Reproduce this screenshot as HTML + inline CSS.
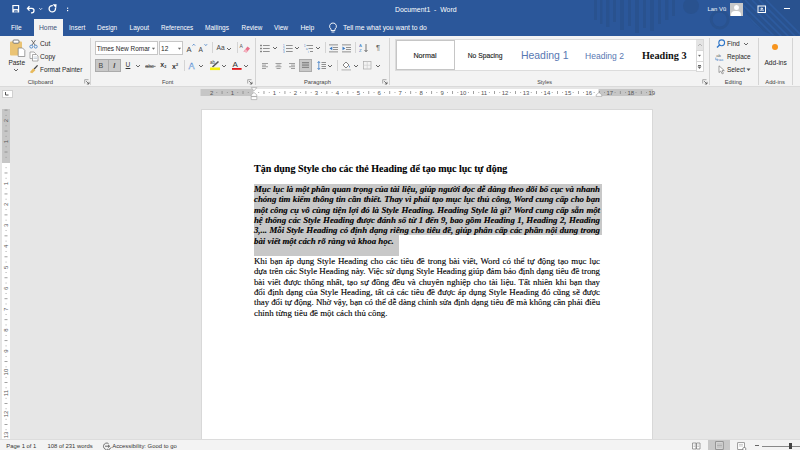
<!DOCTYPE html>
<html><head><meta charset="utf-8">
<style>
*{margin:0;padding:0;box-sizing:border-box}
html,body{width:800px;height:450px;overflow:hidden;background:#e6e6e6;font-family:"Liberation Sans",sans-serif}
.a{position:absolute;white-space:nowrap}
#title{position:absolute;left:0;top:0;width:800px;height:36px;background:#2b579a;overflow:hidden}
.tab{position:absolute;top:22.8px;font-size:6.5px;color:#fff;line-height:9px;white-space:nowrap}
#ribbon{position:absolute;left:0;top:36px;width:800px;height:51px;background:#f3f3f3;border-bottom:1px solid #dadada}
.rt{position:absolute;font-size:7px;color:#262626;line-height:8px;white-space:nowrap}
.gl{position:absolute;top:81px;font-size:6.5px;color:#444;line-height:8px;white-space:nowrap}
.sep{position:absolute;top:40px;width:1px;height:46px;background:#d2d2d2}
#page{position:absolute;left:201px;top:109px;width:452px;height:331px;background:#fff;border:1px solid #d8d8d8;border-bottom:none}
.ln{position:absolute;left:254px;width:346px;font-family:"Liberation Serif",serif;font-size:8.86px;line-height:10px;white-space:nowrap;color:#000;-webkit-text-stroke:0.2px rgba(0,0,0,0.6)}
.j{text-align:justify;text-align-last:justify;white-space:normal;letter-spacing:-0.05px}
#status{position:absolute;left:0;top:439.3px;width:800px;height:11px;background:#f3f3f3;border-top:1px solid #dcdcdc}
.st{position:absolute;top:441px;font-size:6.2px;color:#333;line-height:10px;white-space:nowrap}
</style></head><body>
<div id="title">
 <svg width="800" height="36" style="position:absolute;left:0;top:0">
  <defs><clipPath id="cc"><circle cx="786" cy="-8" r="45"/></clipPath></defs>
  <g fill="#29528f">
   <rect x="594" y="0" width="3" height="20"/><rect x="600" y="0" width="2.5" height="24"/><rect x="606" y="0" width="3.5" height="27"/>
   <rect x="613" y="0" width="3" height="22"/><rect x="620" y="0" width="4" height="30"/><rect x="628" y="0" width="3" height="26"/>
   <rect x="635" y="0" width="4" height="33"/><rect x="643" y="0" width="3" height="28"/><rect x="650" y="0" width="4" height="31"/>
   <rect x="658" y="0" width="3" height="24"/><rect x="665" y="0" width="3.5" height="20"/><rect x="672" y="0" width="3" height="16"/>
   <circle cx="691" cy="6" r="8"/>
   <circle cx="786" cy="-8" r="45"/>
  </g>
  <circle cx="719.7" cy="19.5" r="8.5" fill="none" stroke="#29528f" stroke-width="3"/>
  <g stroke="#2d5b9f" stroke-width="1.6" clip-path="url(#cc)">
   <path d="M724 0 L764 40 M731 0 L771 40 M738 0 L778 40 M745 0 L785 40 M752 0 L792 40 M759 0 L799 40 M766 0 L806 40"/>
  </g>
 </svg>
 <!-- QAT -->
 <svg width="80" height="18" style="position:absolute;left:0;top:0">
  <g fill="none" stroke="#fff" stroke-width="1.1">
   <path d="M29.5 6.2 l-2 2.2 l2 2.2" stroke-width="1.3"/>
   <path d="M27.8 8.4 h4 a2.2 2.2 0 0 1 0 4.4 h-0.8" stroke-width="1.3"/>
   <path d="M39.3 8.2l1.4 1.4l1.4-1.4" stroke-width="0.8"/>
   <path d="M55.4 8 A3.2 3.2 0 1 1 52.8 5.6" stroke-width="1.3"/>
  </g>
  <path d="M52.6 4.2 L56.6 4.2 L56.2 8.4 z" fill="#fff"/><rect x="12.3" y="5" width="6.9" height="7.5" fill="#fff"/><rect x="13.5" y="6.1" width="4.5" height="3" fill="#2b579a"/><rect x="14.3" y="10.3" width="3.2" height="2.2" fill="#2b579a"/><rect x="15.6" y="10.8" width="0.8" height="1.4" fill="#fff"/>
  <rect x="67" y="7.6" width="1.2" height="1.2" fill="#fff"/><rect x="67" y="10" width="1.2" height="1.2" fill="#fff"/>
 </svg>
 <div class="a" style="left:395px;top:4.5px;font-size:6.9px;color:#fff;line-height:9px">Document1&nbsp; -&nbsp; Word</div>
 <div class="a" style="left:707.5px;top:5px;font-size:5.9px;color:#f0f4fa;line-height:9px">Lan Vũ</div>
 <div style="position:absolute;left:729.5px;top:3px;width:13.5px;height:12.7px;background:#c9c9c9;overflow:hidden">
  <div style="position:absolute;left:4.2px;top:1.8px;width:5.2px;height:5.5px;border-radius:50%;background:#fff"></div>
  <div style="position:absolute;left:1.8px;top:8px;width:10px;height:8px;border-radius:4px 4px 0 0;background:#fff"></div>
 </div>
 <svg width="14" height="10" style="position:absolute;left:757px;top:4.5px"><rect x="1" y="1" width="7.5" height="6.5" fill="none" stroke="#fff" stroke-width="1"/><path d="M2.7 5.2 h4.2 M4.8 5 V2.8 M3.6 4 l1.2-1.2 l1.2 1.2" stroke="#fff" stroke-width="0.8" fill="none"/></svg>
 <div style="position:absolute;left:784px;top:8px;width:6px;height:1px;background:#fff"></div>
 <div style="position:absolute;left:33.6px;top:18.8px;width:29.4px;height:17.2px;background:#f3f3f3"></div>
 <div class="tab" style="left:11px;font-size:6.6px">File</div>
 <div class="tab" style="left:39px;font-size:6.75px;color:#41557a">Home</div>
 <div class="tab" style="left:69px;font-size:6.5px">Insert</div>
 <div class="tab" style="left:97px;font-size:6.5px">Design</div>
 <div class="tab" style="left:129.6px;font-size:6.5px">Layout</div>
 <div class="tab" style="left:161px;font-size:6.3px">References</div>
 <div class="tab" style="left:205px;font-size:6.55px">Mailings</div>
 <div class="tab" style="left:241.6px;font-size:6.3px">Review</div>
 <div class="tab" style="left:274px;font-size:6.5px">View</div>
 <div class="tab" style="left:300.4px;font-size:6.8px">Help</div>
 <svg width="10" height="11" style="position:absolute;left:328px;top:22px"><path d="M5 1 a3.3 3.3 0 0 0 -2 6 v1.5 h4 v-1.5 a3.3 3.3 0 0 0 -2 -6z M3.5 10h3" fill="none" stroke="#fff" stroke-width="0.9"/></svg>
 <div class="tab" style="left:343px;font-size:6.8px">Tell me what you want to do</div>
</div>

<div id="ribbon"></div>
<!-- Clipboard group -->
<svg width="18" height="20" style="position:absolute;left:9px;top:39px">
<rect x="1" y="2.6" width="12" height="13.8" rx="1" fill="#eac374"/>
<rect x="4" y="1" width="6" height="3.2" rx="1" fill="#fff" stroke="#6e6e6e" stroke-width="0.9"/>
<path d="M9.2 9 h4.3 l2.3 2.3 v6.2 h-6.6z" fill="#fff" stroke="#7a7a7a" stroke-width="0.7"/>
</svg>
<div class="a" style="left:8.4px;top:57.50px;font-size:6.5px;line-height:10px;color:#262626;">Paste</div>
<svg width="6" height="4" style="position:absolute;left:13.00px;top:68.40px"><path d="M1 1 L3 3 L5 1" fill="none" stroke="#555" stroke-width="0.9"/></svg>
<svg width="10" height="10" style="position:absolute;left:29px;top:39px">
<path d="M2.5 1 L6.2 6.3 M6.5 1 L2.8 6.3" stroke="#555" stroke-width="0.8"/>
<circle cx="2.3" cy="7.6" r="1.5" fill="none" stroke="#4a86c8" stroke-width="0.9"/><circle cx="6.7" cy="7.6" r="1.5" fill="none" stroke="#4a86c8" stroke-width="0.9"/>
</svg>
<div class="a" style="left:40px;top:38.75px;font-size:6.7px;line-height:10px;color:#262626;">Cut</div>
<svg width="10" height="11" style="position:absolute;left:29px;top:51px">
<path d="M1 1 h4 l1.5 1.5 v5 h-5.5z" fill="#fff" stroke="#8a8a8a" stroke-width="0.7"/>
<path d="M3.5 3.5 h4 l1.5 1.5 v5 h-5.5z" fill="#fff" stroke="#8a8a8a" stroke-width="0.7"/>
<path d="M4.5 6h3.5M4.5 7.5h3.5" stroke="#9ab" stroke-width="0.5"/>
</svg>
<div class="a" style="left:40px;top:51.60px;font-size:6.6px;line-height:10px;color:#262626;">Copy</div>
<svg width="10" height="10" style="position:absolute;left:29px;top:64px">
<path d="M0.8 8.2 L4.2 4.2 L6.4 6.2 L3.2 9.3z" fill="#e7b95a"/>
<path d="M5.2 5 L8.6 1.4" stroke="#444" stroke-width="1.3"/>
</svg>
<div class="a" style="left:40px;top:64.50px;font-size:6.4px;line-height:10px;color:#262626;">Format Painter</div>
<div class="a" style="left:27.75px;top:77.25px;font-size:5.9px;line-height:10px;color:#444;">Clipboard</div>
<svg width="6" height="6" style="position:absolute;left:83.5px;top:79px"><path d="M0.7 4.5 V0.7 H4.5" stroke="#888" stroke-width="0.7" fill="none"/><path d="M2.2 2.2 L5 5 M5 2.8 V5 H2.8" stroke="#555" stroke-width="0.8" fill="none"/></svg>
<div style="position:absolute;left:90px;top:38px;width:1px;height:47px;background:#d4d4d4"></div>
<!-- Font group -->
<div style="position:absolute;left:95.3px;top:41.3px;width:62.4px;height:13.4px;background:#fff;border:1px solid #c6c6c6"></div>
<div class="a" style="left:96.8px;top:43.60px;font-size:6.45px;line-height:10px;color:#262626;">Times New Romar</div>
<svg width="5" height="4" style="position:absolute;left:151.30px;top:46.50px"><path d="M0.5 0.5 L4.5 0.5 L2.5 3z" fill="#666" transform="scale(0.8) translate(0.6 0.4)"/></svg>
<div style="position:absolute;left:159px;top:41.3px;width:23.5px;height:13.4px;background:#fff;border:1px solid #c6c6c6"></div>
<div class="a" style="left:161px;top:43.60px;font-size:6.6px;line-height:10px;color:#262626;">12</div>
<svg width="5" height="4" style="position:absolute;left:176.50px;top:46.50px"><path d="M0.5 0.5 L4.5 0.5 L2.5 3z" fill="#666" transform="scale(0.8) translate(0.6 0.4)"/></svg>
<svg width="12" height="10" style="position:absolute;left:186px;top:43px"><text x="0.5" y="8.5" font-family="Liberation Sans" font-size="7.5" fill="#444">A</text><path d="M6.5 2.6 l1.3-1.4 l1.3 1.4" fill="none" stroke="#3b7ac4" stroke-width="0.8"/></svg>
<svg width="12" height="10" style="position:absolute;left:198px;top:43px"><text x="0.5" y="8.5" font-family="Liberation Sans" font-size="6.5" fill="#444">A</text><path d="M6.5 1.2 l1.3 1.4 l1.3-1.4" fill="none" stroke="#3b7ac4" stroke-width="0.8"/></svg>
<div style="position:absolute;left:211.7px;top:42px;width:1px;height:11px;background:#d4d4d4"></div>
<div class="a" style="left:216.6px;top:43.10px;font-size:6.6px;line-height:10px;color:#444;">Aa</div>
<svg width="6" height="4" style="position:absolute;left:225.50px;top:46.50px"><path d="M1 1 L3 3 L5 1" fill="none" stroke="#555" stroke-width="0.9"/></svg>
<div style="position:absolute;left:236.8px;top:42px;width:1px;height:11px;background:#d4d4d4"></div>
<svg width="12" height="12" style="position:absolute;left:239px;top:42px"><text x="0.5" y="5.5" font-family="Liberation Sans" font-size="5" fill="#555">A</text><path d="M4.5 9.5 L8.5 4.5 L11 6.5 L7.5 10.5z" fill="#e8708a"/><path d="M4.5 9.5 L6.5 7 L8.7 9 L7.5 10.5z" fill="#f4b4c0"/></svg>
<div style="position:absolute;left:95.3px;top:59px;width:25.6px;height:12.7px;background:#c8c8c8;border:1px solid #ababab"></div>
<div style="position:absolute;left:108px;top:59px;width:1px;height:12.7px;background:#ababab"></div>
<div class="a" style="left:98.6px;top:61.30px;font-size:7px;line-height:10px;color:#444;">B</div>
<div class="a" style="left:113.3px;top:61.30px;font-size:7px;line-height:10px;color:#444;font-style:italic;font-weight:bold">I</div>
<div class="a" style="left:125.6px;top:60.40px;font-size:6.6px;line-height:10px;color:#333;text-decoration:underline">U</div>
<svg width="6" height="4" style="position:absolute;left:134.90px;top:64.00px"><path d="M1 1 L3 3 L5 1" fill="none" stroke="#555" stroke-width="0.9"/></svg>
<svg width="14" height="8" style="position:absolute;left:144.5px;top:61.5px"><text x="0.3" y="6.2" font-family="Liberation Sans" font-size="5.6" fill="#555" letter-spacing="-0.2">abc</text><rect x="0" y="3.9" width="10.6" height="0.7" fill="#444"/></svg>
<div class="a" style="left:160.3px;top:60.40px;font-size:7px;line-height:10px;color:#333;font-weight:bold">x<span style="font-size:3.8px;vertical-align:-1px">2</span></div>
<div class="a" style="left:172px;top:60.40px;font-size:7px;line-height:10px;color:#333;font-weight:bold">x<span style="font-size:3.8px;vertical-align:3px">2</span></div>
<div style="position:absolute;left:183.6px;top:60px;width:1px;height:11px;background:#d4d4d4"></div>
<svg width="10" height="11" style="position:absolute;left:188px;top:60px"><text x="0.6" y="9" font-family="Liberation Sans" font-size="9" fill="#e4eefa" stroke="#4f8ad0" stroke-width="0.35">A</text></svg>
<svg width="6" height="4" style="position:absolute;left:198.00px;top:64.00px"><path d="M1 1 L3 3 L5 1" fill="none" stroke="#555" stroke-width="0.9"/></svg>
<svg width="12" height="12" style="position:absolute;left:208.5px;top:59px"><text x="1" y="4.5" font-family="Liberation Sans" font-size="4.5" fill="#444">ab</text><path d="M3.5 8 L9.5 2.5" stroke="#555" stroke-width="1.6"/><rect x="1" y="8.5" width="10" height="2.6" fill="#f5f00d"/></svg>
<svg width="6" height="4" style="position:absolute;left:221.00px;top:64.00px"><path d="M1 1 L3 3 L5 1" fill="none" stroke="#555" stroke-width="0.9"/></svg>
<svg width="12" height="12" style="position:absolute;left:230.5px;top:59px"><text x="1.5" y="7.8" font-family="Liberation Sans" font-size="8" fill="#333">A</text><rect x="1" y="9" width="9.6" height="1.8" fill="#e0161a"/></svg>
<svg width="6" height="4" style="position:absolute;left:242.70px;top:64.00px"><path d="M1 1 L3 3 L5 1" fill="none" stroke="#555" stroke-width="0.9"/></svg>
<div class="a" style="left:162px;top:76.70px;font-size:5.7px;line-height:10px;color:#444;">Font</div>
<svg width="6" height="6" style="position:absolute;left:247px;top:79px"><path d="M0.7 4.5 V0.7 H4.5" stroke="#888" stroke-width="0.7" fill="none"/><path d="M2.2 2.2 L5 5 M5 2.8 V5 H2.8" stroke="#555" stroke-width="0.8" fill="none"/></svg>
<div style="position:absolute;left:254.9px;top:38px;width:1px;height:47px;background:#d4d4d4"></div>
<!-- Paragraph group -->
<svg width="11" height="9" style="position:absolute;left:260px;top:43.5px"><rect x="0.3" y="0.8" width="1.4" height="1.4" fill="#555"/><rect x="3" y="1.1" width="6.7" height="0.8" fill="#777"/><rect x="0.3" y="3.8" width="1.4" height="1.4" fill="#555"/><rect x="3" y="4.1" width="6.7" height="0.8" fill="#777"/><rect x="0.3" y="6.8" width="1.4" height="1.4" fill="#555"/><rect x="3" y="7.1" width="6.7" height="0.8" fill="#777"/></svg>
<svg width="6" height="4" style="position:absolute;left:272.30px;top:46.00px"><path d="M1 1 L3 3 L5 1" fill="none" stroke="#555" stroke-width="0.9"/></svg>
<svg width="11" height="9" style="position:absolute;left:282.5px;top:43.5px"><text x="0" y="2.6" font-size="2.8" font-family="Liberation Sans" fill="#3b7ac4">1</text><rect x="3" y="1.1" width="6.7" height="0.8" fill="#777"/><text x="0" y="5.6" font-size="2.8" font-family="Liberation Sans" fill="#3b7ac4">2</text><rect x="3" y="4.1" width="6.7" height="0.8" fill="#777"/><text x="0" y="8.6" font-size="2.8" font-family="Liberation Sans" fill="#3b7ac4">3</text><rect x="3" y="7.1" width="6.7" height="0.8" fill="#777"/></svg>
<svg width="6" height="4" style="position:absolute;left:293.90px;top:46.00px"><path d="M1 1 L3 3 L5 1" fill="none" stroke="#555" stroke-width="0.9"/></svg>
<svg width="11" height="9" style="position:absolute;left:304px;top:43.5px"><text x="0" y="2.6" font-size="2.8" font-family="Liberation Sans" fill="#3b7ac4">1</text><rect x="2.5" y="1.1" width="6.5" height="0.8" fill="#777"/><text x="2" y="5.6" font-size="2.8" font-family="Liberation Sans" fill="#3b7ac4">a</text><rect x="4.5" y="4.1" width="4.5" height="0.8" fill="#777"/><text x="4" y="8.6" font-size="2.8" font-family="Liberation Sans" fill="#3b7ac4">i</text><rect x="6" y="7.1" width="3" height="0.8" fill="#777"/></svg>
<svg width="6" height="4" style="position:absolute;left:314.50px;top:46.00px"><path d="M1 1 L3 3 L5 1" fill="none" stroke="#555" stroke-width="0.9"/></svg>
<div style="position:absolute;left:325px;top:42px;width:1px;height:11px;background:#d4d4d4"></div>
<svg width="10" height="9" style="position:absolute;left:328.5px;top:43.5px"><g fill="#777"><rect x="0" y="0.5" width="9" height="0.8"/><rect x="4" y="3" width="5" height="0.8"/><rect x="4" y="5" width="5" height="0.8"/><rect x="0" y="7.5" width="9" height="0.8"/></g><path d="M0.5 4.4 L3.3 2.6 V6.2z" fill="#3b7ac4"/></svg>
<svg width="10" height="9" style="position:absolute;left:341.5px;top:43.5px"><g fill="#777"><rect x="0" y="0.5" width="9" height="0.8"/><rect x="4" y="3" width="5" height="0.8"/><rect x="4" y="5" width="5" height="0.8"/><rect x="0" y="7.5" width="9" height="0.8"/></g><path d="M3.3 4.4 L0.5 2.6 V6.2z" fill="#3b7ac4"/></svg>
<div style="position:absolute;left:354.7px;top:42px;width:1px;height:11px;background:#d4d4d4"></div>
<svg width="10" height="10" style="position:absolute;left:358.5px;top:43px"><text x="0" y="4.3" font-family="Liberation Sans" font-size="4.3" fill="#3b7ac4">A</text><text x="0" y="9" font-family="Liberation Sans" font-size="4.3" fill="#3b7ac4">Z</text><path d="M7 1 V8.5 M5.5 7 L7 8.7 L8.5 7" stroke="#555" stroke-width="0.8" fill="none"/></svg>
<div class="a" style="left:376px;top:43.00px;font-size:7.5px;line-height:10px;color:#666;">¶</div>
<svg width="9" height="7" style="position:absolute;left:261.5px;top:62.5px"><g fill="#8a8a8a"><rect x="0" y="0.0" width="6" height="0.8"/><rect x="0" y="1.7" width="4" height="0.8"/><rect x="0" y="3.4" width="6" height="0.8"/><rect x="0" y="5.1" width="4" height="0.8"/></g></svg>
<svg width="9" height="7" style="position:absolute;left:275.3px;top:62.5px"><g fill="#8a8a8a"><rect x="0.5" y="0.0" width="6" height="0.8"/><rect x="1.5" y="1.7" width="4" height="0.8"/><rect x="0.5" y="3.4" width="6" height="0.8"/><rect x="1.5" y="5.1" width="4" height="0.8"/></g></svg>
<svg width="9" height="7" style="position:absolute;left:288.3px;top:62.5px"><g fill="#8a8a8a"><rect x="1" y="0.0" width="6" height="0.8"/><rect x="3" y="1.7" width="4" height="0.8"/><rect x="1" y="3.4" width="6" height="0.8"/><rect x="3" y="5.1" width="4" height="0.8"/></g></svg>
<div style="position:absolute;left:299.2px;top:58.5px;width:12.7px;height:13.1px;background:#c8c8c8;border:1px solid #ababab"></div>
<svg width="9" height="7" style="position:absolute;left:302px;top:62.3px"><g fill="#777"><rect x="0" y="0" width="7" height="0.8"/><rect x="0" y="1.7" width="7" height="0.8"/><rect x="0" y="3.4" width="7" height="0.8"/><rect x="0" y="5.1" width="7" height="0.8"/></g></svg>
<svg width="10" height="10" style="position:absolute;left:316.5px;top:60.5px"><path d="M1.8 0.5 V8.5 M0.5 2 L1.8 0.5 L3.1 2 M0.5 7 L1.8 8.5 L3.1 7" stroke="#3b7ac4" stroke-width="0.8" fill="none"/><g fill="#777"><rect x="4.5" y="1" width="4.5" height="0.8"/><rect x="4.5" y="3" width="4.5" height="0.8"/><rect x="4.5" y="5" width="4.5" height="0.8"/><rect x="4.5" y="7" width="4.5" height="0.8"/></g></svg>
<svg width="6" height="4" style="position:absolute;left:327.30px;top:64.00px"><path d="M1 1 L3 3 L5 1" fill="none" stroke="#555" stroke-width="0.9"/></svg>
<div style="position:absolute;left:337.2px;top:60px;width:1px;height:11px;background:#d4d4d4"></div>
<svg width="11" height="11" style="position:absolute;left:340.5px;top:59.5px"><path d="M2 5 L5 2 L8 5 L5 8z" fill="#fff" stroke="#666" stroke-width="0.8"/><path d="M8.5 5.5 q1 1.5 0 2.2 q-1 -0.7 0 -2.2z" fill="#3b7ac4"/><rect x="0.5" y="9.3" width="9.5" height="1.2" fill="#bbb"/></svg>
<svg width="6" height="4" style="position:absolute;left:353.00px;top:64.00px"><path d="M1 1 L3 3 L5 1" fill="none" stroke="#555" stroke-width="0.9"/></svg>
<svg width="9" height="9" style="position:absolute;left:363px;top:61px"><rect x="0.5" y="0.5" width="7.5" height="7.5" fill="none" stroke="#aaa" stroke-width="0.7"/><path d="M4.25 0.5 V8 M0.5 4.25 H8" stroke="#ccc" stroke-width="0.6"/></svg>
<svg width="6" height="4" style="position:absolute;left:374.60px;top:64.00px"><path d="M1 1 L3 3 L5 1" fill="none" stroke="#555" stroke-width="0.9"/></svg>
<div class="a" style="left:304px;top:77.00px;font-size:5.78px;line-height:10px;color:#444;">Paragraph</div>
<svg width="6" height="6" style="position:absolute;left:381.7px;top:79px"><path d="M0.7 4.5 V0.7 H4.5" stroke="#888" stroke-width="0.7" fill="none"/><path d="M2.2 2.2 L5 5 M5 2.8 V5 H2.8" stroke="#555" stroke-width="0.8" fill="none"/></svg>
<div style="position:absolute;left:389.2px;top:38px;width:1px;height:47px;background:#d4d4d4"></div>
<!-- Styles -->
<div style="position:absolute;left:394.7px;top:38.5px;width:309px;height:32.5px;background:#fff;border:1px solid #dcdcdc"></div>
<div style="position:absolute;left:395.5px;top:40.3px;width:59.5px;height:30.2px;border:1.6px solid #c6c6c6;background:#fff"></div>
<div class="a" style="left:413.4px;top:50.60px;font-size:7.2px;line-height:10px;color:#222;-webkit-text-stroke:0.12px #222">Normal</div>
<div class="a" style="left:467.7px;top:50.60px;font-size:6.75px;line-height:10px;color:#222;-webkit-text-stroke:0.12px #222">No Spacing</div>
<div class="a" style="left:520.9px;top:49.4px;font-size:10.48px;line-height:13px;color:#5878b2">Heading 1</div>
<div class="a" style="left:585.1px;top:50.8px;font-size:8.53px;line-height:11px;color:#5878b2">Heading 2</div>
<div class="a" style="left:641.9px;top:49.7px;font-size:10.25px;line-height:12px;font-weight:bold;font-family:'Liberation Serif',serif;color:#111">Heading 3</div>
<div style="position:absolute;left:695.7px;top:39.4px;width:8.5px;height:32.2px;background:#fff;border:1px solid #d8d8d8"></div>
<div style="position:absolute;left:696.2px;top:39.7px;width:7px;height:10px;background:#e4e4e4"></div>
<div style="position:absolute;left:695.7px;top:50px;width:8px;height:1px;background:#d8d8d8"></div>
<div style="position:absolute;left:695.7px;top:60.5px;width:8px;height:1px;background:#d8d8d8"></div>
<svg width="6" height="4" style="position:absolute;left:696.7px;top:43px"><path d="M1 3 L3 1 L5 3" fill="none" stroke="#aaa" stroke-width="0.8"/></svg>
<svg width="5" height="4" transform="scale(0.8)" style="position:absolute;left:696.90px;top:54.30px"><path d="M0.5 0.5 L4.5 0.5 L2.5 3z" fill="#666"/></svg>
<div style="position:absolute;left:697.6px;top:64.6px;width:3.6px;height:0.8px;background:#666"></div>
<svg width="5" height="4" style="position:absolute;left:696.90px;top:65.50px"><path d="M0.5 0.5 L4.5 0.5 L2.5 3z" fill="#666"/></svg>
<div class="a" style="left:537.2px;top:76.70px;font-size:5.43px;line-height:10px;color:#444;">Styles</div>
<svg width="6" height="6" style="position:absolute;left:701.9px;top:79px"><path d="M0.7 4.5 V0.7 H4.5" stroke="#888" stroke-width="0.7" fill="none"/><path d="M2.2 2.2 L5 5 M5 2.8 V5 H2.8" stroke="#555" stroke-width="0.8" fill="none"/></svg>
<div style="position:absolute;left:709px;top:38px;width:1px;height:47px;background:#d4d4d4"></div>
<!-- Editing -->
<svg width="10" height="10" style="position:absolute;left:715.5px;top:38.5px"><circle cx="5.7" cy="3.8" r="2.9" fill="none" stroke="#2e75c8" stroke-width="1.1"/><path d="M3.6 5.9 L1 8.5" stroke="#2e75c8" stroke-width="1.4"/></svg>
<div class="a" style="left:726.9px;top:38.75px;font-size:6.6px;line-height:10px;color:#262626;">Find</div>
<svg width="6" height="4" style="position:absolute;left:743.00px;top:42.00px"><path d="M1 1 L3 3 L5 1" fill="none" stroke="#555" stroke-width="0.9"/></svg>
<svg width="11" height="9" style="position:absolute;left:715px;top:52.5px"><text x="1.2" y="3.6" font-family="Liberation Sans" font-size="4.3" fill="#666">ab</text><text x="4" y="8.3" font-family="Liberation Sans" font-size="4.3" fill="#3b7ac4">ac</text><path d="M0.8 4.6 v2.2 h2.4 M2.4 6 l0.9 0.8 l-0.9 0.8" stroke="#3b7ac4" stroke-width="0.6" fill="none"/></svg>
<div class="a" style="left:726.9px;top:51.60px;font-size:6.5px;line-height:10px;color:#262626;">Replace</div>
<svg width="8" height="10" style="position:absolute;left:717.5px;top:64.8px"><path d="M1 0.8 V7.6 L2.7 6 L4.2 8.9 L5.4 8.3 L4 5.6 L6.3 5.6z" fill="#fff" stroke="#666" stroke-width="0.6"/></svg>
<div class="a" style="left:726.9px;top:64.50px;font-size:6.5px;line-height:10px;color:#262626;">Select</div>
<svg width="5" height="4" style="position:absolute;left:745.50px;top:68.00px"><path d="M0.5 0.5 L4.5 0.5 L2.5 3z" fill="#555"/></svg>
<div class="a" style="left:724.75px;top:77.25px;font-size:5.61px;line-height:10px;color:#444;">Editing</div>
<div style="position:absolute;left:758px;top:38px;width:1px;height:47px;background:#d4d4d4"></div>
<!-- Addins -->
<div style="position:absolute;left:771.9px;top:44px;width:6.3px;height:6.3px;border-radius:50%;background:#f7941d"></div>
<div class="a" style="left:764.4px;top:57.50px;font-size:6.64px;line-height:10px;color:#262626;">Add-ins</div>
<div class="a" style="left:765.25px;top:77.25px;font-size:5.82px;line-height:10px;color:#444;">Add-ins</div>
<div style="position:absolute;left:792px;top:38px;width:1px;height:47px;background:#d4d4d4"></div>
<!-- Rulers -->
<div style="position:absolute;left:1.5px;top:89.5px;width:11px;height:8.5px;background:#fff;border:1px solid #d0d0d0"></div>
<svg width="6" height="6" style="position:absolute;left:4px;top:91px"><path d="M1.5 1 V4 H4.5" stroke="#444" stroke-width="0.9" fill="none"/></svg>
<svg width="800" height="20" style="position:absolute;left:0;top:84px"><rect x="200.5" y="5" width="452.5" height="7" fill="#c6c6c6"/><rect x="253.5" y="5" width="345" height="7" fill="#fff"/><g fill="#8a8a8a"><rect x="216.42" y="8" width="0.8" height="0.9"/><rect x="221.66" y="7" width="0.8" height="3"/><rect x="226.90" y="8" width="0.8" height="0.9"/><rect x="237.38" y="8" width="0.8" height="0.9"/><rect x="242.62" y="7" width="0.8" height="3"/><rect x="247.86" y="8" width="0.8" height="0.9"/><rect x="258.34" y="8" width="0.8" height="0.9"/><rect x="263.58" y="7" width="0.8" height="3"/><rect x="268.82" y="8" width="0.8" height="0.9"/><rect x="279.30" y="8" width="0.8" height="0.9"/><rect x="284.54" y="7" width="0.8" height="3"/><rect x="289.78" y="8" width="0.8" height="0.9"/><rect x="300.26" y="8" width="0.8" height="0.9"/><rect x="305.50" y="7" width="0.8" height="3"/><rect x="310.74" y="8" width="0.8" height="0.9"/><rect x="321.22" y="8" width="0.8" height="0.9"/><rect x="326.46" y="7" width="0.8" height="3"/><rect x="331.70" y="8" width="0.8" height="0.9"/><rect x="342.18" y="8" width="0.8" height="0.9"/><rect x="347.42" y="7" width="0.8" height="3"/><rect x="352.66" y="8" width="0.8" height="0.9"/><rect x="363.14" y="8" width="0.8" height="0.9"/><rect x="368.38" y="7" width="0.8" height="3"/><rect x="373.62" y="8" width="0.8" height="0.9"/><rect x="384.10" y="8" width="0.8" height="0.9"/><rect x="389.34" y="7" width="0.8" height="3"/><rect x="394.58" y="8" width="0.8" height="0.9"/><rect x="405.06" y="8" width="0.8" height="0.9"/><rect x="410.30" y="7" width="0.8" height="3"/><rect x="415.54" y="8" width="0.8" height="0.9"/><rect x="426.02" y="8" width="0.8" height="0.9"/><rect x="431.26" y="7" width="0.8" height="3"/><rect x="436.50" y="8" width="0.8" height="0.9"/><rect x="446.98" y="8" width="0.8" height="0.9"/><rect x="452.22" y="7" width="0.8" height="3"/><rect x="457.46" y="8" width="0.8" height="0.9"/><rect x="467.94" y="8" width="0.8" height="0.9"/><rect x="473.18" y="7" width="0.8" height="3"/><rect x="478.42" y="8" width="0.8" height="0.9"/><rect x="488.90" y="8" width="0.8" height="0.9"/><rect x="494.14" y="7" width="0.8" height="3"/><rect x="499.38" y="8" width="0.8" height="0.9"/><rect x="509.86" y="8" width="0.8" height="0.9"/><rect x="515.10" y="7" width="0.8" height="3"/><rect x="520.34" y="8" width="0.8" height="0.9"/><rect x="530.82" y="8" width="0.8" height="0.9"/><rect x="536.06" y="7" width="0.8" height="3"/><rect x="541.30" y="8" width="0.8" height="0.9"/><rect x="551.78" y="8" width="0.8" height="0.9"/><rect x="557.02" y="7" width="0.8" height="3"/><rect x="562.26" y="8" width="0.8" height="0.9"/><rect x="572.74" y="8" width="0.8" height="0.9"/><rect x="577.98" y="7" width="0.8" height="3"/><rect x="583.22" y="8" width="0.8" height="0.9"/><rect x="593.70" y="8" width="0.8" height="0.9"/><rect x="598.94" y="7" width="0.8" height="3"/><rect x="604.18" y="8" width="0.8" height="0.9"/><rect x="614.66" y="8" width="0.8" height="0.9"/><rect x="619.90" y="7" width="0.8" height="3"/><rect x="625.14" y="8" width="0.8" height="0.9"/><rect x="635.62" y="8" width="0.8" height="0.9"/><rect x="640.86" y="7" width="0.8" height="3"/><rect x="646.10" y="8" width="0.8" height="0.9"/></g><g font-family="Liberation Sans" font-size="6" fill="#555" text-anchor="middle"><text x="211.58" y="11.2">2</text><text x="232.54" y="11.2">1</text><text x="274.46" y="11.2">1</text><text x="295.42" y="11.2">2</text><text x="316.38" y="11.2">3</text><text x="337.34" y="11.2">4</text><text x="358.30" y="11.2">5</text><text x="379.26" y="11.2">6</text><text x="400.22" y="11.2">7</text><text x="421.18" y="11.2">8</text><text x="442.14" y="11.2">9</text><text x="463.10" y="11.2">10</text><text x="484.06" y="11.2">11</text><text x="505.02" y="11.2">12</text><text x="525.98" y="11.2">13</text><text x="546.94" y="11.2">14</text><text x="567.90" y="11.2">15</text><text x="588.86" y="11.2">16</text><text x="609.82" y="11.2">17</text><text x="630.78" y="11.2">18</text><text x="651.74" y="11.2">19</text></g><path d="M251.2 3.6 h5.6 l-2.8 3.3z M251.2 12.6 h5.6 v3 h-5.6z M251.2 12.4 v-1.6 l2.8-2.3 l2.8 2.3 v1.6z" fill="#fff" stroke="#9a9a9a" stroke-width="0.6"/><path d="M596.2 12.4 v-1.6 l2.8-2.3 l2.8 2.3 v1.6z" fill="#fff" stroke="#9a9a9a" stroke-width="0.6"/></svg>
<svg width="14" height="350" style="position:absolute;left:0;top:100px"><rect x="2" y="9" width="8" height="54" fill="#c6c6c6"/><rect x="2" y="63" width="8" height="277" fill="#fff"/><g fill="#8a8a8a"><rect x="4.5" y="9.70" width="3" height="0.8"/><rect x="5.6" y="14.94" width="0.9" height="0.8"/><rect x="5.6" y="25.42" width="0.9" height="0.8"/><rect x="4.5" y="30.66" width="3" height="0.8"/><rect x="5.6" y="35.90" width="0.9" height="0.8"/><rect x="5.6" y="46.38" width="0.9" height="0.8"/><rect x="4.5" y="51.62" width="3" height="0.8"/><rect x="5.6" y="56.86" width="0.9" height="0.8"/><rect x="5.6" y="67.34" width="0.9" height="0.8"/><rect x="4.5" y="72.58" width="3" height="0.8"/><rect x="5.6" y="77.82" width="0.9" height="0.8"/><rect x="5.6" y="88.30" width="0.9" height="0.8"/><rect x="4.5" y="93.54" width="3" height="0.8"/><rect x="5.6" y="98.78" width="0.9" height="0.8"/><rect x="5.6" y="109.26" width="0.9" height="0.8"/><rect x="4.5" y="114.50" width="3" height="0.8"/><rect x="5.6" y="119.74" width="0.9" height="0.8"/><rect x="5.6" y="130.22" width="0.9" height="0.8"/><rect x="4.5" y="135.46" width="3" height="0.8"/><rect x="5.6" y="140.70" width="0.9" height="0.8"/><rect x="5.6" y="151.18" width="0.9" height="0.8"/><rect x="4.5" y="156.42" width="3" height="0.8"/><rect x="5.6" y="161.66" width="0.9" height="0.8"/><rect x="5.6" y="172.14" width="0.9" height="0.8"/><rect x="4.5" y="177.38" width="3" height="0.8"/><rect x="5.6" y="182.62" width="0.9" height="0.8"/><rect x="5.6" y="193.10" width="0.9" height="0.8"/><rect x="4.5" y="198.34" width="3" height="0.8"/><rect x="5.6" y="203.58" width="0.9" height="0.8"/><rect x="5.6" y="214.06" width="0.9" height="0.8"/><rect x="4.5" y="219.30" width="3" height="0.8"/><rect x="5.6" y="224.54" width="0.9" height="0.8"/><rect x="5.6" y="235.02" width="0.9" height="0.8"/><rect x="4.5" y="240.26" width="3" height="0.8"/><rect x="5.6" y="245.50" width="0.9" height="0.8"/><rect x="5.6" y="255.98" width="0.9" height="0.8"/><rect x="4.5" y="261.22" width="3" height="0.8"/><rect x="5.6" y="266.46" width="0.9" height="0.8"/><rect x="5.6" y="276.94" width="0.9" height="0.8"/><rect x="4.5" y="282.18" width="3" height="0.8"/><rect x="5.6" y="287.42" width="0.9" height="0.8"/><rect x="5.6" y="297.90" width="0.9" height="0.8"/><rect x="4.5" y="303.14" width="3" height="0.8"/><rect x="5.6" y="308.38" width="0.9" height="0.8"/><rect x="5.6" y="318.86" width="0.9" height="0.8"/><rect x="4.5" y="324.10" width="3" height="0.8"/><rect x="5.6" y="329.34" width="0.9" height="0.8"/></g><g font-family="Liberation Sans" font-size="6" fill="#555" text-anchor="middle"><text x="0" y="0" transform="translate(8.2 20.58) rotate(-90)">2</text><text x="0" y="0" transform="translate(8.2 41.54) rotate(-90)">1</text><text x="0" y="0" transform="translate(8.2 83.46) rotate(-90)">1</text><text x="0" y="0" transform="translate(8.2 104.42) rotate(-90)">2</text><text x="0" y="0" transform="translate(8.2 125.38) rotate(-90)">3</text><text x="0" y="0" transform="translate(8.2 146.34) rotate(-90)">4</text><text x="0" y="0" transform="translate(8.2 167.30) rotate(-90)">5</text><text x="0" y="0" transform="translate(8.2 188.26) rotate(-90)">6</text><text x="0" y="0" transform="translate(8.2 209.22) rotate(-90)">7</text><text x="0" y="0" transform="translate(8.2 230.18) rotate(-90)">8</text><text x="0" y="0" transform="translate(8.2 251.14) rotate(-90)">9</text><text x="0" y="0" transform="translate(8.2 272.10) rotate(-90)">10</text><text x="0" y="0" transform="translate(8.2 293.06) rotate(-90)">11</text><text x="0" y="0" transform="translate(8.2 314.02) rotate(-90)">12</text><text x="0" y="0" transform="translate(8.2 334.98) rotate(-90)">13</text></g></svg>
<!-- Page -->
<div id="page"></div>
<div class="ln" style="top:162.5px;font-size:10px;font-weight:bold;line-height:12px">Tận dụng Style cho các thẻ Heading để tạo mục lục tự động</div>
<div style="position:absolute;left:254px;top:184px;width:347.6px;height:51px;background:#c8c8c8"></div>
<div style="position:absolute;left:254px;top:235px;width:144.7px;height:20.5px;background:#c8c8c8"></div>
<div style="font-weight:bold;font-style:italic">
<div class="ln j" style="top:184.16px">Mục lục là một phần quan trọng của tài liệu, giúp người đọc dễ dàng theo dõi bố cục và nhanh</div>
<div class="ln j" style="top:194.44px">chóng tìm kiếm thông tin cần thiết. Thay vì phải tạo mục lục thủ công, Word cung cấp cho bạn</div>
<div class="ln j" style="top:204.72px">một công cụ vô cùng tiện lợi đó là Style Heading. Heading Style là gì? Word cung cấp sẵn một</div>
<div class="ln j" style="top:215.00px">hệ thống các Style Heading được đánh số từ 1 đến 9, bao gồm Heading 1, Heading 2, Heading</div>
<div class="ln j" style="top:225.28px">3,... Mỗi Style Heading có định dạng riêng cho tiêu đề, giúp phân cấp các phần nội dung trong</div>
<div class="ln" style="top:235.56px">bài viết một cách rõ ràng và khoa học.</div>
</div>
<div class="ln j" style="top:256.16px">Khi bạn áp dụng Style Heading cho các tiêu đề trong bài viết, Word có thể tự động tạo mục lục</div>
<div class="ln j" style="top:266.46px">dựa trên các Style Heading này. Việc sử dụng Style Heading giúp đảm bảo định dạng tiêu đề trong</div>
<div class="ln j" style="top:276.76px">bài viết được thống nhất, tạo sự đồng đều và chuyên nghiệp cho tài liệu. Tất nhiên khi bạn thay</div>
<div class="ln j" style="top:287.06px">đổi định dạng của Style Heading, tất cả các tiêu đề được áp dụng Style Heading đó cũng sẽ được</div>
<div class="ln j" style="top:297.36px">thay đổi tự động. Nhờ vậy, bạn có thể dễ dàng chỉnh sửa định dạng tiêu đề mà không cần phải điều</div>
<div class="ln" style="top:307.66px">chỉnh từng tiêu đề một cách thủ công.</div>
<!-- Status -->
<div id="status"></div>
<div class="st" style="left:6.25px;font-size:5.9px">Page 1 of 1</div>
<div class="st" style="left:47.5px;font-size:5.9px">108 of 231 words</div>
<svg width="10" height="9" style="position:absolute;left:102px;top:442px"><path d="M6.5 1.5 A3.3 3.3 0 1 0 4.5 7.6" fill="none" stroke="#555" stroke-width="0.8"/><path d="M3 4.2 h4.5 M6 2.8 l1.5 1.4 l-1.5 1.4" fill="none" stroke="#444" stroke-width="0.8"/><path d="M5.2 7 l1.2 1.2 l2.8-2.8" fill="none" stroke="#444" stroke-width="0.9"/></svg>
<div class="st" style="left:112.25px;font-size:5.9px">Accessibility: Good to go</div>
<svg width="10" height="8" style="position:absolute;left:692px;top:442px"><path d="M0.5 1 h3.5 v6 h-3.5z M4.5 1 h3.5 v6 h-3.5z" fill="#fff" stroke="#777" stroke-width="0.7"/><path d="M1.5 3h1.8M1.5 4.5h1.8M5.3 3h1.8M5.3 4.5h1.8" stroke="#999" stroke-width="0.5"/></svg>
<div style="position:absolute;left:708.2px;top:439.5px;width:21.6px;height:10.5px;background:#c8c8c8"></div>
<svg width="10" height="9" style="position:absolute;left:714.5px;top:441px"><rect x="0.7" y="0.7" width="7.5" height="7.6" fill="#dadada" stroke="#777" stroke-width="0.7"/><path d="M2 3h5M2 4.5h5M2 6h5" stroke="#888" stroke-width="0.5"/></svg>
<svg width="10" height="9" style="position:absolute;left:736.5px;top:441.5px"><rect x="0.7" y="0.7" width="6.8" height="6.8" fill="#fff" stroke="#777" stroke-width="0.7"/><path d="M2 2.6h4M2 4h4" stroke="#999" stroke-width="0.5"/><circle cx="7.3" cy="7" r="1.6" fill="#fff" stroke="#555" stroke-width="0.6"/></svg>
<div style="position:absolute;left:755px;top:445.3px;width:3.7px;height:0.9px;background:#666"></div>
<div style="position:absolute;left:761.7px;top:445.5px;width:39px;height:0.9px;background:#888"></div>
<div style="position:absolute;left:789px;top:443.2px;width:2.7px;height:5.5px;background:#444"></div>
</body></html>
